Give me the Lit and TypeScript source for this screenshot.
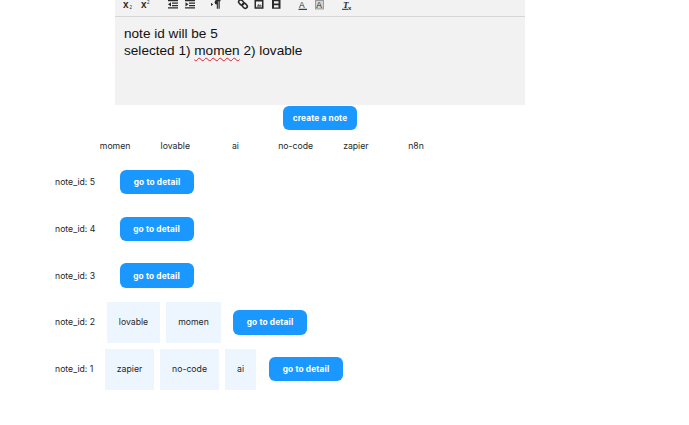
import { LitElement, html, css, svg } from "lit";
import { customElement } from "lit/decorators.js";

const rows: { id: number; tags: string[]; gap: number; btnGap: number; tagW: number[]; left: number }[] = [
  { id: 5, tags: [], gap: 0, btnGap: 0, tagW: [], left: 25 },
  { id: 4, tags: [], gap: 0, btnGap: 0, tagW: [], left: 24.5 },
  { id: 3, tags: [], gap: 0, btnGap: 0, tagW: [], left: 24.5 },
  { id: 2, tags: ["lovable", "momen"], gap: 6, btnGap: 12, tagW: [53, 55], left: 12 },
  { id: 1, tags: ["zapier", "no-code", "ai"], gap: 6, btnGap: 13, tagW: [49, 59, 31], left: 10 },
];
const header = ["momen", "lovable", "ai", "no-code", "zapier", "n8n"];

@customElement("app-root")
export class AppRoot extends LitElement {
  static styles = css`
    :host { display: block; width: 689px; height: 425px; background: #fff; overflow: hidden;
      font-family: "Inter", "Liberation Sans", sans-serif; color: #262626; }
    .main { margin-left: 115px; width: 410px; }
    .editor { height: 105px; background: #f2f2f2; }
    .toolbar { height: 16px; border-bottom: 1px solid #d6d6d6; }
    .toolbar svg { display: block; }
    .body { padding: 7.5px 9px; font-family: "Liberation Sans", Arial, sans-serif; font-size: 13.6px; line-height: 17.5px; color: #111; }
    .sp { text-decoration: underline wavy #d23; text-decoration-thickness: 1px; text-underline-offset: 2px; }
    .create { display: flex; justify-content: center; margin-top: 0.5px; }
    .btn { background: #1a98ff; color: #fff; border-radius: 6px; height: 24.5px; display: flex; align-items: center; justify-content: center;
      font-size: 8.3px; font-weight: 700; letter-spacing: 0.15px; flex: none; }
    .create .btn { width: 74.5px; }
    .tags { display: grid; grid-template-columns: repeat(6, 60.2px); margin: 9.5px 0 0 85px; height: 13px; align-items: center; }
    .tags span { text-align: center; font-size: 8.7px; }
    .rows { margin-top: 9px; display: flex; flex-direction: column; gap: 5.75px; }
    .row { display: flex; align-items: center; padding-left: 55px; height: 41px; font-size: 8.7px; }
    .id { width: 40px; flex: none; white-space: nowrap; }
    .tag { background: #edf6ff; height: 41px; display: flex; align-items: center; justify-content: center; flex: none; }
    .go { width: 74px; }
  `;

  private toolbarIcons() {
    return svg`<svg width="260" height="16" viewBox="0 0 260 16" fill="#2a2a2a">
      <text x="8" y="7.5" font-size="10" font-weight="700" font-family="Liberation Sans">x</text>
      <text x="14.5" y="8.5" font-size="4.5" font-family="Liberation Sans">2</text>
      <text x="26" y="7.5" font-size="10" font-weight="700" font-family="Liberation Sans">x</text>
      <text x="32" y="3.5" font-size="4.5" font-family="Liberation Sans">2</text>
      <path d="M53 0h10v1.3H53zM57 2.6h6v1.2h-6zM57 5h6v1.2h-6zM53 7.3h10v1.3H53zM56 2.2v4.2L53 4.3z"/>
      <path d="M70 0h10v1.3H70zM74 2.6h6v1.2h-6zM74 5h6v1.2h-6zM70 7.3h10v1.3H70zM70.5 2.2v4.2l3-2.1z"/>
      <path d="M96 2.7v3.4l2.2-1.7zM101 0h4.5v1.2h-.8v7.6h-1.2V1.2h-.6v7.6h-1.1V4.6a2.3 2.3 0 0 1 .2-4.6z"/>
      <g fill="none" stroke="#2a2a2a" stroke-width="1.6"><rect x="123.5" y="0.2" width="5.5" height="4" rx="2" transform="rotate(45 126 2.2)"/><rect x="127" y="3.8" width="5.5" height="4" rx="2" transform="rotate(45 129.7 5.8)"/></g>
      <path fill-rule="evenodd" d="M139.5 0h9v8.8h-9zM141 1.5v5.8h6V1.5z"/>
      <path fill="#666" d="M141.5 6.8l2-3 1.5 1.5 1-1 .8 2.5z"/>
      <path fill-rule="evenodd" d="M157 0h8.5v8.8H157zM159 1.3v2.3h4.5V1.3zM159 5.2v2.3h4.5V5.2z"/>
      <text x="184" y="7.8" font-size="8.5" font-family="Liberation Sans">A</text>
      <rect x="183.5" y="8.8" width="8.5" height="1.1"/>
      <rect x="200" y="0" width="9" height="9.4" fill="#9a9a9a"/>
      <rect x="201" y="1" width="7" height="7.4" fill="#d4d4d4"/>
      <text x="201.3" y="7.6" font-size="8.5" font-family="Liberation Sans">A</text>
      <text x="228" y="7.8" font-size="9" font-style="italic" font-weight="700" font-family="Liberation Serif">T</text>
      <text x="233" y="9.5" font-size="6" font-weight="700" font-family="Liberation Sans">x</text>
      <rect x="227" y="8.8" width="6" height="1"/>
    </svg>`;
  }

  render() {
    return html`
      <div class="main">
        <div class="editor">
          <div class="toolbar">${this.toolbarIcons()}</div>
          <div class="body">note id will be 5<br />selected 1) <span class="sp">momen</span> 2) lovable</div>
        </div>
        <div class="create"><div class="btn">create a note</div></div>
      </div>
      <div class="tags">${header.map((t) => html`<span>${t}</span>`)}</div>
      <div class="rows">
        ${rows.map(
          (r) => html`<div class="row">
            <span class="id">note_id: ${r.id}</span>
            <div style="width:${r.left}px;flex:none"></div>
            ${r.tags.map(
              (t, i) => html`<div class="tag" style="width:${r.tagW[i]}px;margin-right:${i < r.tags.length - 1 ? r.gap : r.btnGap}px">${t}</div>`
            )}
            <div class="btn go">go to detail</div>
          </div>`
        )}
      </div>
    `;
  }
}
